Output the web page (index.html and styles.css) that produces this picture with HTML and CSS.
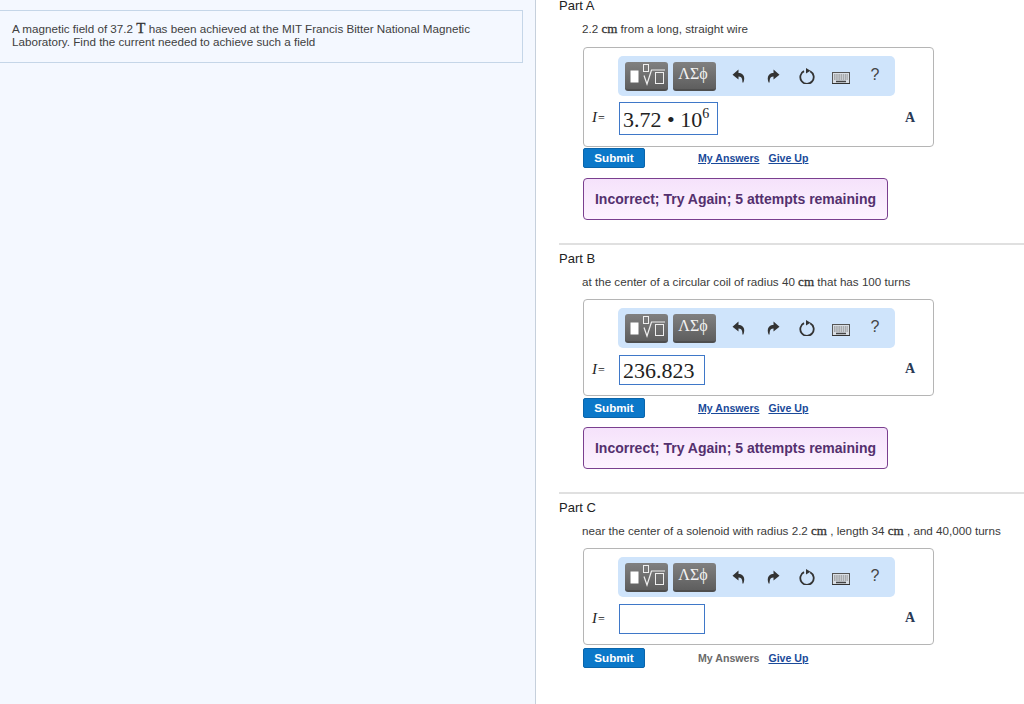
FILE: index.html
```html
<!DOCTYPE html>
<html lang="en">
<head>
<meta charset="utf-8">
<title>Magnetic field problem</title>
<link rel="stylesheet" href="styles.css">
</head>
<body>
<svg class="defs" width="0" height="0" aria-hidden="true">
  <symbol id="i-undo" viewBox="0 0 16 16"><path d="M7.500 1.500 1.500 6.800 7.500 11.600V8.500c2.300 0 3.300 1.200 3.700 3.200.2 1 .2 2.300.2 2.800h1c1-2.400 1.300-5.300-.1-7.200C11.200 5.500 9.500 5 7.500 5z" fill="#333"/></symbol>
  <symbol id="i-redo" viewBox="0 0 16 16"><path d="M8.500 1.500 14.500 6.800 8.500 11.600V8.500c-2.300 0-3.300 1.200-3.700 3.200-.2 1-.2 2.300-.2 2.800h-1c-1-2.400-1.300-5.300.1-7.200C4.800 5.500 6.500 5 8.500 5z" fill="#333"/></symbol>
  <symbol id="i-reset" viewBox="0 0 16 16"><path d="M5 3.100a6.700 6.700 0 1 0 6.200.1" fill="none" stroke="#333" stroke-width="1.800"/><path d="M7 0 11.500 2.800 7 5.600z" fill="#333"/></symbol>
  <symbol id="i-keys" viewBox="0 0 18 12"><rect x=".5" y=".5" width="17" height="11" fill="#d8dde3" stroke="#555"/><path d="M2 3h14M2 5h14M2 7h14" stroke="#777" stroke-dasharray="1.500 .7"/><path d="M4 9.500h10" stroke="#444" stroke-width="1.500"/><path d="M0 11.500h18" stroke="#333"/></symbol>
  <symbol id="i-tmpl" viewBox="0 0 40 26"><rect x="3.500" y="8.500" width="8" height="12" fill="#fff"/><rect x="16.500" y="2.500" width="5" height="7" fill="none" stroke="#eee"/><path d="M17 13.500l3 8.500 4.500-14H38" fill="none" stroke="#eee" stroke-width="1.200"/><rect x="28.500" y="10.500" width="8" height="11" fill="none" stroke="#eee"/></symbol>
</svg>
<aside class="left">
  <div class="intro">
    <div class="line">A magnetic field of 37.2 <span class="unit big">T</span> has been achieved at the MIT Francis Bitter National Magnetic</div>
    <div class="line">Laboratory. Find the current needed to achieve such a field</div>
  </div>
</aside>
<main class="right">
  <section class="part first">
    <h2>Part A</h2>
    <p class="stmt">2.2 <span class="unit">cm</span> from a long, straight wire</p>
    <div class="answer">
      <div class="toolbar">
        <span class="btn"><svg class="tmpl"><use href="#i-tmpl"/></svg></span>
        <span class="btn greek">ΛΣϕ</span>
        <div class="tools">
          <svg class="ico"><use href="#i-undo"/></svg>
          <svg class="ico"><use href="#i-redo"/></svg>
          <svg class="ico"><use href="#i-reset"/></svg>
          <svg class="kbd"><use href="#i-keys"/></svg>
          <span class="help">?</span>
        </div>
      </div>
      <div class="row">
        <span class="var"><i>I</i><span class="eq">=</span></span>
        <span class="input wide">3.72 • 10<sup>6</sup></span>
        <span class="amp">A</span>
      </div>
    </div>
    <div class="actions">
      <span class="submit">Submit</span>
      <a class="link" href="#">My Answers</a>
      <a class="link" href="#">Give Up</a>
    </div>
    <div class="feedback">Incorrect; Try Again; 5 attempts remaining</div>
  </section>
  <section class="part">
    <h2>Part B</h2>
    <p class="stmt">at the center of a circular coil of radius 40 <span class="unit">cm</span> that has 100 turns</p>
    <div class="answer">
      <div class="toolbar">
        <span class="btn"><svg class="tmpl"><use href="#i-tmpl"/></svg></span>
        <span class="btn greek">ΛΣϕ</span>
        <div class="tools">
          <svg class="ico"><use href="#i-undo"/></svg>
          <svg class="ico"><use href="#i-redo"/></svg>
          <svg class="ico"><use href="#i-reset"/></svg>
          <svg class="kbd"><use href="#i-keys"/></svg>
          <span class="help">?</span>
        </div>
      </div>
      <div class="row">
        <span class="var"><i>I</i><span class="eq">=</span></span>
        <span class="input">236.823</span>
        <span class="amp">A</span>
      </div>
    </div>
    <div class="actions">
      <span class="submit">Submit</span>
      <a class="link" href="#">My Answers</a>
      <a class="link" href="#">Give Up</a>
    </div>
    <div class="feedback">Incorrect; Try Again; 5 attempts remaining</div>
  </section>
  <section class="part last">
    <h2>Part C</h2>
    <p class="stmt">near the center of a solenoid with radius 2.2 <span class="unit">cm</span> , length 34 <span class="unit">cm</span> , and 40,000 turns</p>
    <div class="answer">
      <div class="toolbar">
        <span class="btn"><svg class="tmpl"><use href="#i-tmpl"/></svg></span>
        <span class="btn greek">ΛΣϕ</span>
        <div class="tools">
          <svg class="ico"><use href="#i-undo"/></svg>
          <svg class="ico"><use href="#i-redo"/></svg>
          <svg class="ico"><use href="#i-reset"/></svg>
          <svg class="kbd"><use href="#i-keys"/></svg>
          <span class="help">?</span>
        </div>
      </div>
      <div class="row">
        <span class="var"><i>I</i><span class="eq">=</span></span>
        <span class="input"></span>
        <span class="amp">A</span>
      </div>
    </div>
    <div class="actions">
      <span class="submit">Submit</span>
      <span class="link off">My Answers</span>
      <a class="link" href="#">Give Up</a>
    </div>
  </section>
</main>
</body>
</html>
```
FILE: styles.css
```css
* { box-sizing: border-box; }
html, body { margin: 0; height: 100%; }
body {
  display: flex;
  height: 704px;
  overflow: hidden;
  background: #fff;
  color: #3a3a3a;
  font-family: "Liberation Sans", Arial, sans-serif;
  font-size: 11.65px;
}
.defs { position: absolute; }
.left {
  flex: 0 0 536px;
  background: #f4f8ff;
  border-right: 1px solid #c6d0dc;
  padding: 10px 12px 0 0;
}
.intro {
  height: 53px;
  padding: 10px 12px 0 12px;
  border: 1px solid #c5d6e8;
  border-left: 0;
  color: #404040;
}
.line { height: 14px; line-height: 14px; white-space: nowrap; }
.unit { font-family: "Liberation Serif", serif; font-size: 13px; line-height: 1; color: #333; -webkit-text-stroke: .3px #333; }
.unit.big { font-size: 15px; }
.right { flex: 1; min-width: 0; padding-left: 23px; margin-top: -2px; }
.part { border-top: 2px solid #e0e0e0; height: 249px; }
.part.first { border-top: 0; height: 245px; }
.part.last { height: auto; }
.part h2 {
  margin: 0;
  padding-top: 6px;
  font-size: 13px;
  line-height: 15px;
  font-weight: 400;
  color: #222;
}
.part.first h2 { padding-top: 0; }
.stmt { margin: 8px 0 0 23px; line-height: 15px; height: 15px; white-space: nowrap; }
.answer {
  width: 351px;
  height: 97px;
  margin: 10px 0 0 24px;
  padding: 8px 0 0 34px;
  border: 1px solid #b5b5b5;
  border-radius: 4px;
}
.first .answer { height: 100px; margin-top: 11px; }
.toolbar {
  display: flex;
  align-items: center;
  width: 277px;
  height: 40px;
  padding-left: 7px;
  gap: 5px;
  background: #cfe4fb;
  border-radius: 5px;
}
.btn {
  display: flex;
  align-items: center;
  justify-content: center;
  width: 43px;
  height: 29px;
  border-radius: 3px;
  border-bottom: 2px solid #4e4e4e;
  background: linear-gradient(#808080, #5e5e5e);
}
.tmpl { width: 40px; height: 26px; }
.greek { padding: 0 3px 2px 0; color: #f2f2f2; font-family: "Liberation Serif", serif; font-size: 16px; }
.tools { display: flex; align-items: center; margin-left: 10px; gap: 18px; }
.ico { width: 16px; height: 16px; }
.kbd { width: 18px; height: 12px; margin: 3px -1px 0; }
.help { width: 16px; padding-bottom: 2px; text-align: center; font-size: 16px; color: #444; }
.row { display: flex; align-items: center; margin: 7px 0 0 -26px; }
.first .row { margin-top: 6px; }
.var { width: 27px; padding-bottom: 2px; font-family: "Liberation Serif", serif; font-size: 15px; color: #222; }
.eq { margin-left: 1px; font-size: 12px; }
.input {
  display: block;
  width: 86px;
  height: 30px;
  padding: 0 3px;
  border: 1px solid #3f78c8;
  background: #fff;
  font-family: "Liberation Serif", serif;
  font-size: 22px;
  line-height: 29px;
  color: #222;
  white-space: nowrap;
}
.input.wide { width: 99px; height: 33px; line-height: 33px; }
.input sup { font-size: 14px; line-height: 0; vertical-align: 9px; }
.amp { margin-left: auto; margin-right: 18px; padding-bottom: 2px; font-family: "Liberation Serif", serif; font-size: 14px; font-weight: 700; color: #2a3a55; }
.actions { display: flex; align-items: center; height: 20px; margin: 2px 0 0 24px; }
.first .actions { margin-top: 1px; }
.last .actions { margin-top: 3px; }
.submit {
  width: 62px;
  height: 20px;
  margin-right: 53px;
  background: #0b78c9;
  border: 1px solid #0a65ab;
  border-radius: 2px;
  color: #fff;
  font-weight: 700;
  line-height: 17px;
  text-align: center;
}
.link {
  margin-right: 9px;
  font-size: 10.6px;
  font-weight: 700;
  color: #1a4a9a;
  text-decoration: underline;
}
.link.off { color: #6a6a6a; text-decoration: none; }
.feedback {
  width: 305px;
  height: 42px;
  margin: 9px 0 0 24px;
  border: 1px solid #7a3f8f;
  border-radius: 4px;
  background: linear-gradient(#f5e2fb, #fdf3ff);
  color: #54306e;
  font-size: 14px;
  font-weight: 700;
  line-height: 40px;
  text-align: center;
  white-space: nowrap;
}
.first .feedback { margin-top: 10px; }
```
